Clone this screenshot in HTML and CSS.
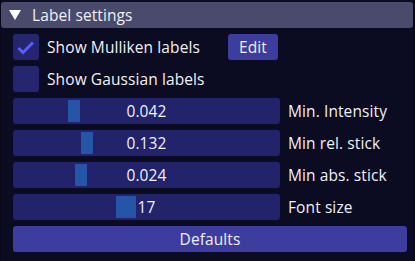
FILE: index.html
```html
<!DOCTYPE html>
<html>
<head>
<meta charset="utf-8">
<link rel="stylesheet" href="styles.css">
</head>
<body>
<div class="window">
  <div class="header">
    <svg class="arrow" width="12" height="10" viewBox="0 0 12 10"><polygon points="0,0 12,0 6,10" fill="#ffffff"/></svg>
    <span class="title">Label settings</span>
  </div>
  <div class="content">
    <div class="row">
      <div class="check">
        <svg width="26" height="26" viewBox="0 0 26 26"><polyline points="5.5,14 10,18.5 20,8.5" fill="none" stroke="#5b5bff" stroke-width="3" stroke-linejoin="miter" stroke-linecap="butt"/></svg>
      </div>
      <span class="label first">Show Mulliken labels</span>
      <button class="btn edit">Edit</button>
    </div>
    <div class="row">
      <div class="check"></div>
      <span class="label">Show Gaussian labels</span>
    </div>
    <div class="row">
      <div class="slider"><div class="grab" style="left:55px"></div><span class="val">0.042</span></div>
      <span class="slabel">Min. Intensity</span>
    </div>
    <div class="row">
      <div class="slider"><div class="grab" style="left:68px"></div><span class="val">0.132</span></div>
      <span class="slabel">Min rel. stick</span>
    </div>
    <div class="row">
      <div class="slider"><div class="grab" style="left:62px"></div><span class="val">0.024</span></div>
      <span class="slabel">Min abs. stick</span>
    </div>
    <div class="row">
      <div class="slider"><div class="grab wide" style="left:103px"></div><span class="val">17</span></div>
      <span class="slabel">Font size</span>
    </div>
    <button class="btn defaults">Defaults</button>
  </div>
</div>
</body>
</html>
```

FILE: styles.css
```css
html, body {
  margin: 0;
  padding: 0;
  background: #0b0b21;
}
body {
  width: 415px;
  height: 261px;
  overflow: hidden;
  font-family: "Open Sans", "Noto Sans", sans-serif;
  font-size: 15.5px;
  letter-spacing: 0.1px;
  color: #f0f0f6;
}
.window {
  height: 261px;
  box-sizing: border-box;
  border-left: 1px solid #08081a;
  border-right: 2px solid #08081a;
  padding-top: 2px;
}
.header {
  height: 26px;
  background: #4a4a6d;
  border-radius: 3px;
  display: flex;
  align-items: center;
}
.arrow {
  margin-left: 8px;
  margin-right: 11px;
}
.title {
  line-height: 26px;
}
.content {
  padding: 6px 6px 0 12px;
  display: flex;
  flex-direction: column;
  gap: 6px;
}
.row {
  display: flex;
  align-items: center;
  height: 26px;
}
.check {
  width: 26px;
  height: 26px;
  background: #262670;
  border-radius: 3px;
  flex: none;
}
.check svg {
  display: block;
}
.label {
  margin-left: 8px;
}
.label.first {
  width: 181px;
  white-space: nowrap;
  flex: none;
}
.btn {
  font-family: inherit;
  font-size: 15.5px;
  letter-spacing: 0.1px;
  color: #f0f0f6;
  background: #3d3da0;
  border: none;
  border-radius: 3px;
  padding: 0;
  height: 26px;
}
.edit {
  width: 50px;
}
.slider {
  position: relative;
  width: 267px;
  height: 26px;
  background: #23236b;
  border-radius: 3px;
  display: flex;
  align-items: center;
  justify-content: center;
  flex: none;
}
.grab {
  position: absolute;
  top: 2px;
  bottom: 2px;
  width: 12px;
  background: #2655a8;
  border-radius: 1px;
}
.grab.wide {
  width: 20px;
}
.val {
  position: relative;
}
.slabel {
  margin-left: 8px;
}
.defaults {
  width: 394px;
}
```
